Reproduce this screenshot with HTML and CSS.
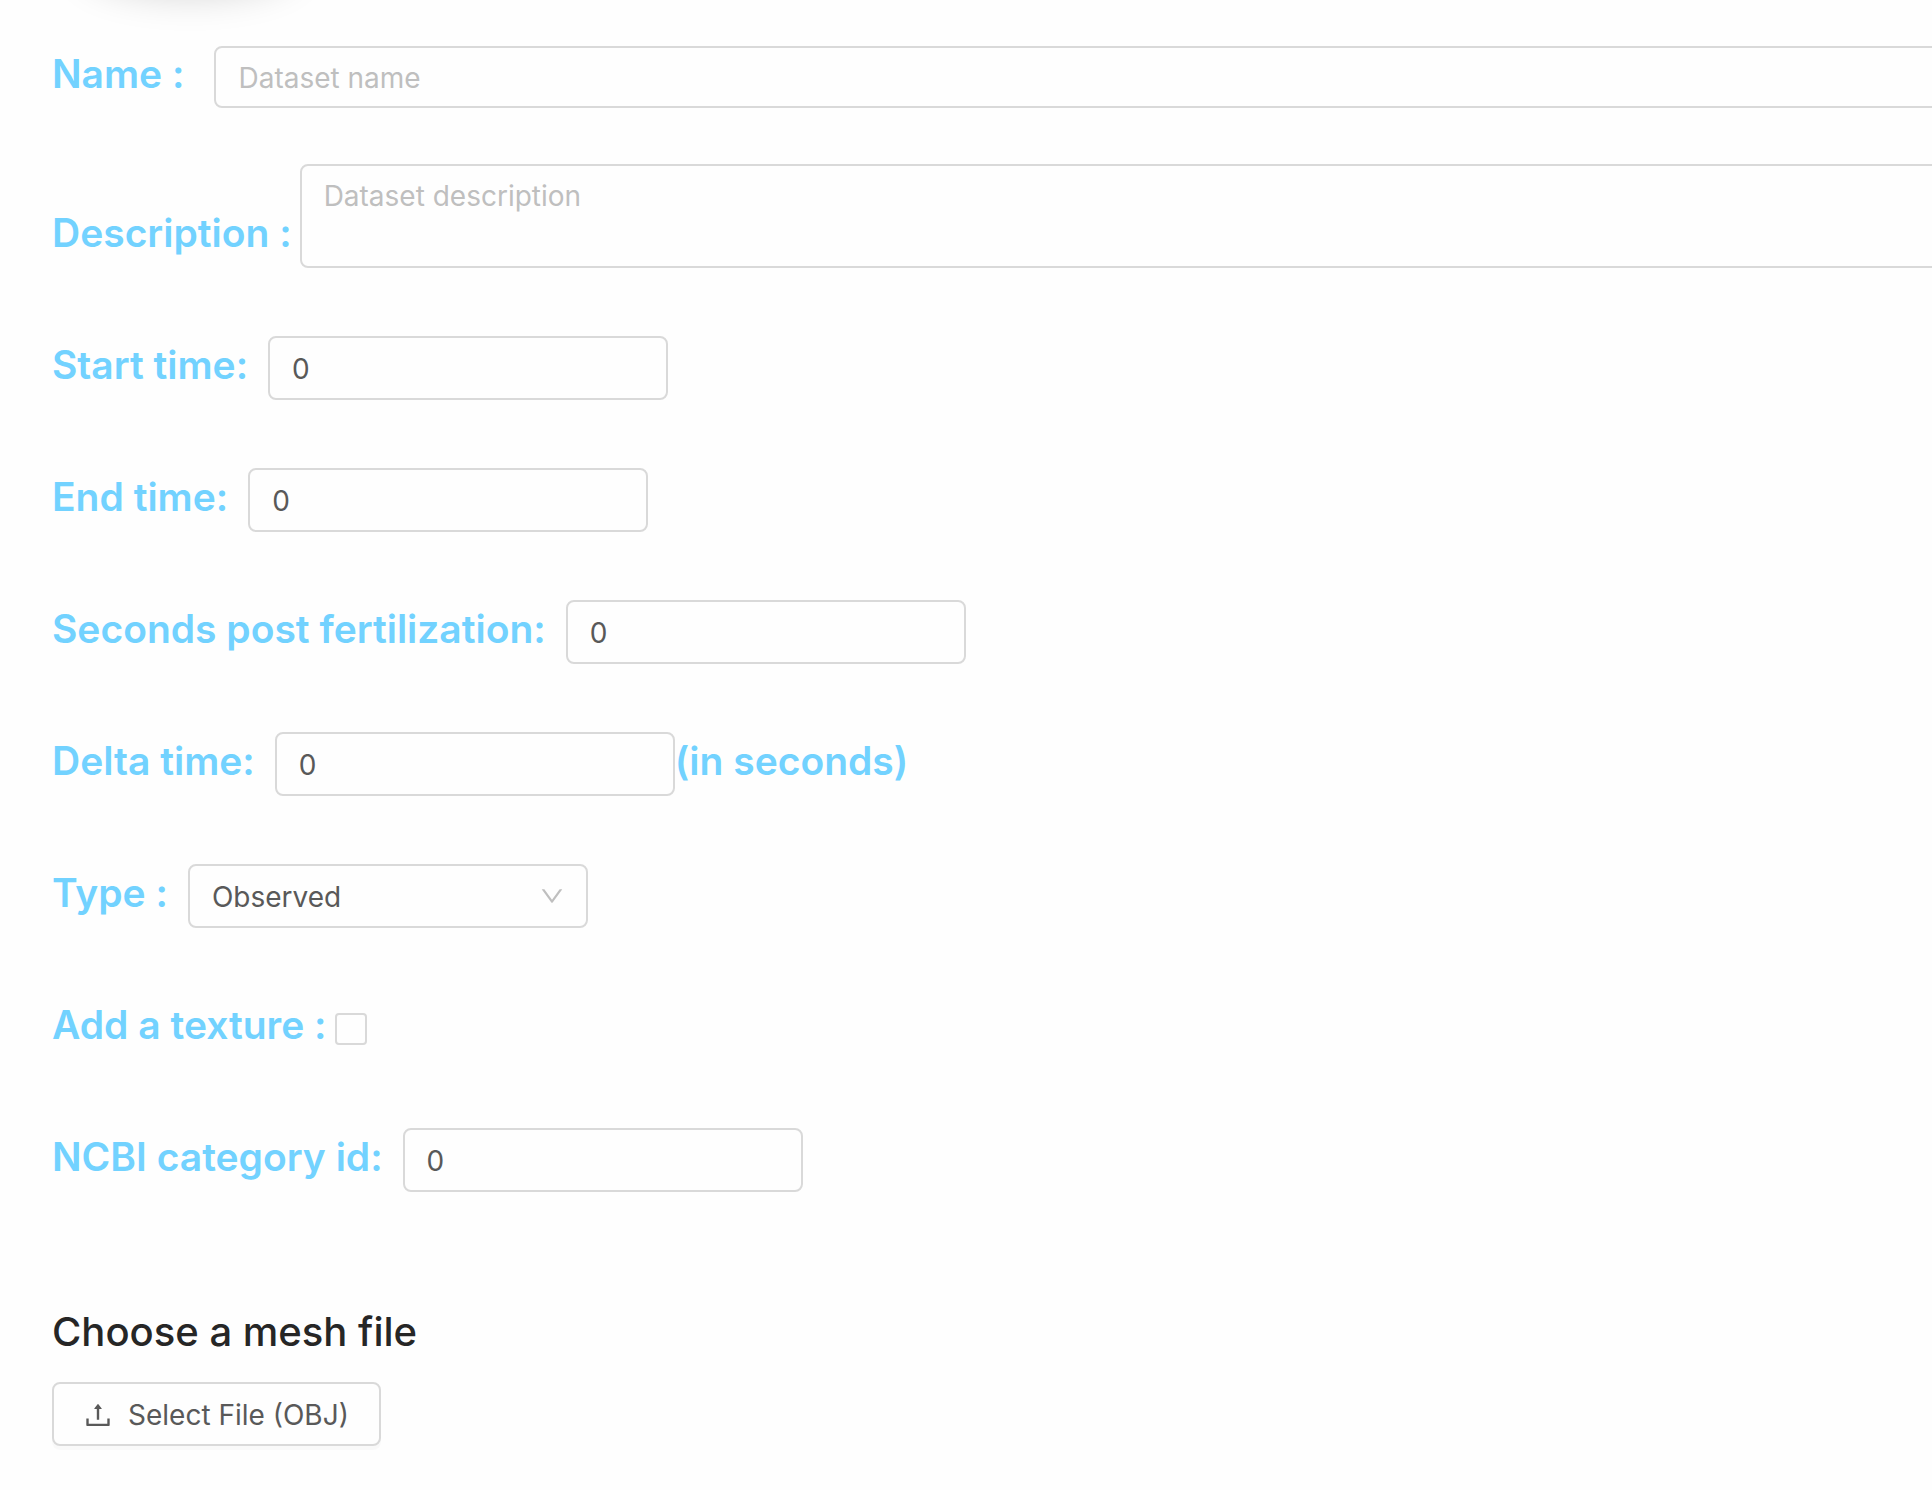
FILE: index.html
```html
<!DOCTYPE html>
<html lang="en">
<head>
  <meta charset="UTF-8">
  <title>Dataset</title>
  <link rel="stylesheet" href="styles.css">
</head>
<body>

  <div class="top-shadow"></div>

  <form class="dataset-form">
    <div class="field name-field">
      <label for="name">Name :</label>
      <input type="text" id="name" class="input" placeholder="Dataset name">
    </div>

    <div class="field description-field">
      <label for="description">Description :</label>
      <textarea id="description" class="input" placeholder="Dataset description"></textarea>
    </div>

    <div class="field">
      <label for="start-time">Start time:</label>
      <input type="text" id="start-time" class="input short" inputmode="numeric" value="0">
    </div>

    <div class="field">
      <label for="end-time">End time:</label>
      <input type="text" id="end-time" class="input short" inputmode="numeric" value="0">
    </div>

    <div class="field">
      <label for="spf">Seconds post fertilization:</label>
      <input type="text" id="spf" class="input short" inputmode="numeric" value="0">
    </div>

    <div class="field">
      <label for="delta-time">Delta time:</label>
      <div class="with-unit">
        <input type="text" id="delta-time" class="input short" inputmode="numeric" value="0">
        <span class="unit">(in seconds)</span>
      </div>
    </div>

    <div class="field">
      <label for="type">Type :</label>
      <div class="select-wrap">
        <select id="type" class="input short">
          <option>Observed</option>
          <option>Simulated</option>
        </select>
        <svg class="select-arrow" viewBox="64 64 896 896" fill="currentColor" aria-hidden="true">
          <path d="M884 256h-75c-5.100 0-9.900 2.500-12.900 6.600L512 654.200 227.900 262.600c-3-4.100-7.800-6.600-12.900-6.600h-75c-6.500 0-10.300 7.400-6.500 12.700l352.600 486.100c12.800 17.600 39 17.600 51.700 0l352.600-486.100c3.900-5.300.1-12.700-6.400-12.700z"/>
        </svg>
      </div>
    </div>

    <div class="field texture-field">
      <label for="texture">Add a texture :</label>
      <input type="checkbox" id="texture" class="checkbox">
    </div>

    <div class="field">
      <label for="ncbi">NCBI category id:</label>
      <input type="text" id="ncbi" class="input short" inputmode="numeric" value="0">
    </div>

    <!-- Mesh upload -->
    <div class="upload">
      <h4>Choose a mesh file</h4>
      <button type="button" class="upload-btn">
        <svg class="upload-icon" viewBox="64 64 896 896" fill="currentColor" aria-hidden="true">
          <path d="M400 317.700h73.900V656c0 4.400 3.600 8 8 8h60c4.400 0 8-3.600 8-8V317.700H624c6.700 0 10.400-7.700 6.300-12.900L518.300 163a8 8 0 0 0-12.600 0l-112 141.700c-4.100 5.300-.4 13 6.300 13zM878 626h-60c-4.400 0-8 3.600-8 8v154H214V634c0-4.400-3.600-8-8-8h-60c-4.400 0-8 3.600-8 8v198c0 17.700 14.300 32 32 32h684c17.700 0 32-14.300 32-32V634c0-4.400-3.600-8-8-8z"/>
        </svg>
        <span>Select File (OBJ)</span>
      </button>
    </div>
  </form>

</body>
</html>
```

FILE: styles.css
```css
* {
  box-sizing: border-box;
}

body {
  margin: 0;
  font-family: Inter, "Liberation Sans", sans-serif;
  font-size: 28px;
  color: #595959;
  background: #fefefe;
  overflow-x: hidden;
}

.top-shadow {
  position: absolute;
  top: -72px;
  left: 84px;
  width: 212px;
  height: 64px;
  border-radius: 50%;
  box-shadow: 0 0 40px rgba(0, 0, 0, 0.2);
}

.dataset-form {
  display: flex;
  flex-direction: column;
  gap: 68px;
  padding: 46px 0 44px 52px;
}

.field {
  display: flex;
  align-items: baseline;
  gap: 20px;
  height: 64px;
}

.field label, .unit {
  font-size: 39px;
  line-height: 54px;
  font-weight: 600;
  color: #72d2ff;
  white-space: nowrap;
}

.input {
  height: 64px;
  padding: 2px 22px 0;
  border: 2px solid #d9d9d9;
  border-radius: 8px;
  background: #fefefe;
  color: #595959;
  font-family: inherit;
  font-size: 28px;
  line-height: 44px;
}

.input::placeholder {
  color: #bfbfbf;
}

.short {
  width: 400px;
}

/* long fields run past the right edge of the window */
.name-field .input, .description-field .input {
  flex: 1;
  margin-right: -12px;
}

.name-field {
  gap: 30px;
  height: 62px;
  margin-bottom: -12px;
}

.name-field .input {
  height: 62px;
}

.description-field {
  gap: 8px;
  height: 104px;
  align-items: flex-end;
}

.description-field label {
  padding-bottom: 8px;
}

.description-field .input {
  height: 104px;
  padding: 8px 22px;
  resize: none;
}

.with-unit {
  display: flex;
  align-items: baseline;
}

.select-wrap {
  position: relative;
}

.select-wrap select {
  appearance: none;
}

.select-arrow {
  position: absolute;
  top: 20px;
  right: 24px;
  width: 24px;
  height: 24px;
  color: #bfbfbf;
  pointer-events: none;
}

.texture-field {
  gap: 8px;
  align-items: flex-start;
  padding-top: 2px;
}

.checkbox {
  appearance: none;
  width: 32px;
  height: 32px;
  margin: 15px 0 0;
  border: 2px solid #d9d9d9;
  border-radius: 4px;
  background: #fefefe;
}

.upload {
  display: flex;
  flex-direction: column;
  align-items: flex-start;
  gap: 22px;
  padding-top: 44px;
}

.upload h4 {
  margin: 0;
  font-size: 40px;
  line-height: 56px;
  font-weight: 500;
  color: #262626;
}

.upload-btn {
  display: flex;
  align-items: center;
  gap: 16px;
  height: 64px;
  padding: 2px 30px 0;
  border: 2px solid #d9d9d9;
  border-radius: 8px;
  background: #fefefe;
  box-shadow: 0 4px 0 rgba(0, 0, 0, 0.02);
  color: #595959;
  font-family: inherit;
  font-size: 28px;
  cursor: pointer;
}

.upload-icon {
  width: 28px;
  height: 28px;
}
```
